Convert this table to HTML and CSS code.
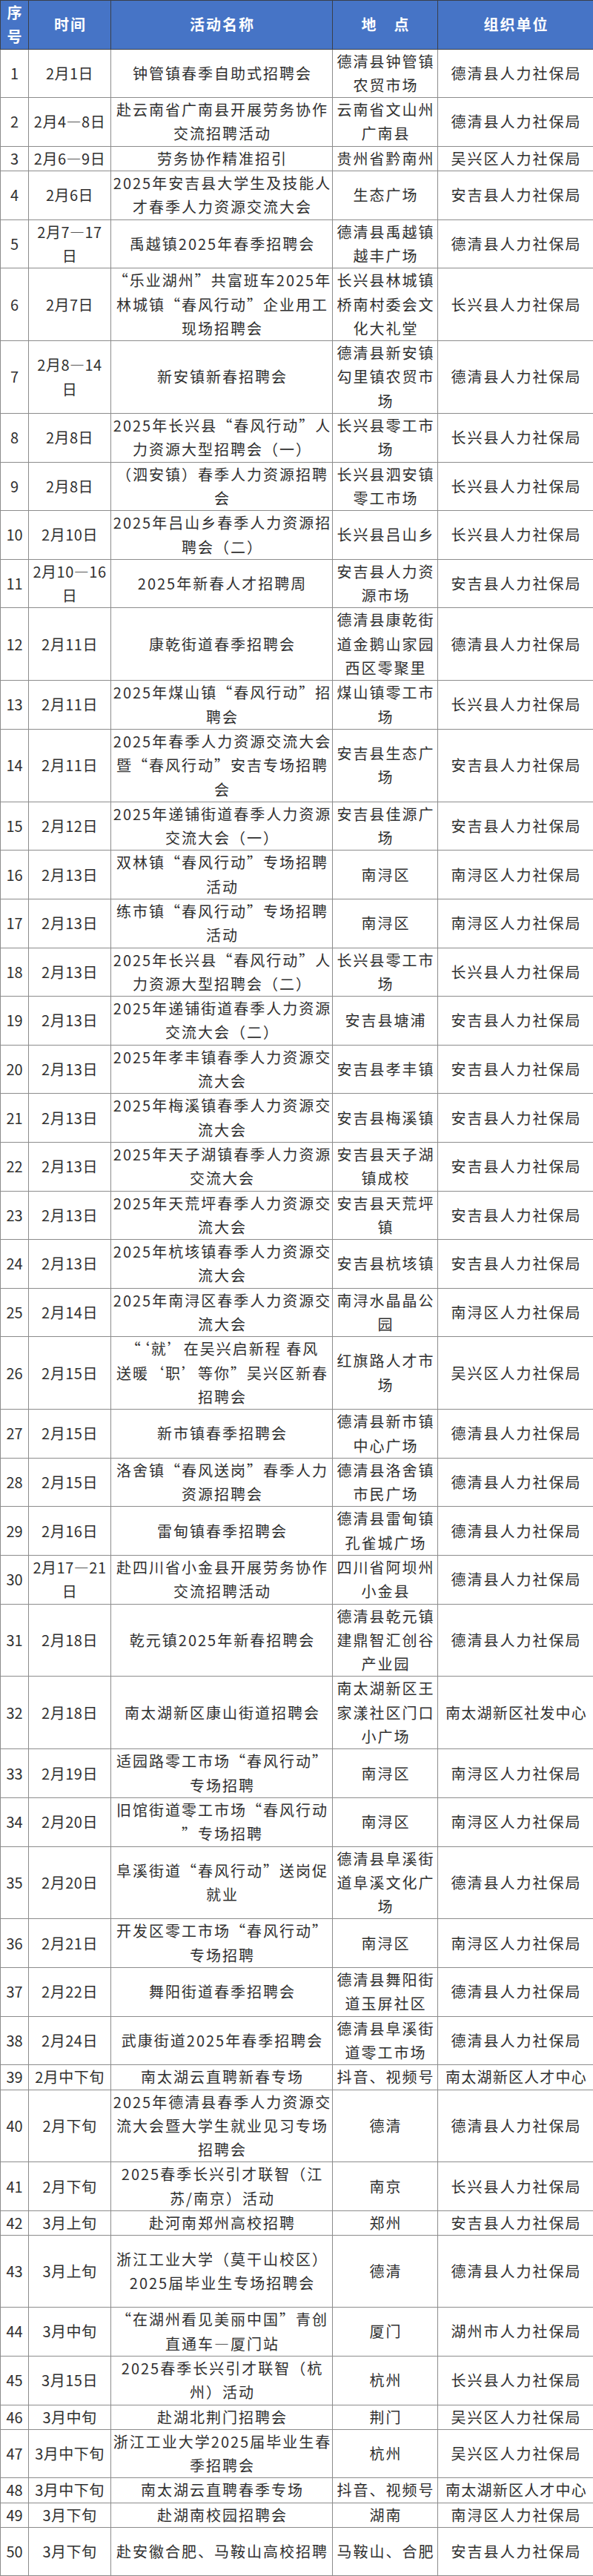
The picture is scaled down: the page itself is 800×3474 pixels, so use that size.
FILE: index.html
```html
<!DOCTYPE html>
<html lang="zh-CN">
<head>
<meta charset="utf-8">
<title>湖州市春季招聘活动安排</title>
<link rel="stylesheet" href="styles.css">
</head>
<body>
<table class="schedule">
<colgroup>
<col class="w-no"><col class="w-time"><col class="w-name"><col class="w-place"><col class="w-org">
</colgroup>
<thead>
<tr class="head">
<th class="c-no">序<br>号</th><th>时间</th><th>活动名称</th><th>地　点</th><th>组织单位</th>
</tr>
</thead>
<tbody>
<tr><td class="c-no">1</td><td class="c-time">2月1日</td><td>钟管镇春季自助式招聘会</td><td>德清县钟管镇<br>农贸市场</td><td>德清县人力社保局</td></tr>
<tr><td class="c-no">2</td><td class="c-time">2月4—8日</td><td>赴云南省广南县开展劳务协作<br>交流招聘活动</td><td>云南省文山州<br>广南县</td><td>德清县人力社保局</td></tr>
<tr><td class="c-no">3</td><td class="c-time">2月6—9日</td><td>劳务协作精准招引</td><td>贵州省黔南州</td><td>吴兴区人力社保局</td></tr>
<tr><td class="c-no">4</td><td class="c-time">2月6日</td><td>2025年安吉县大学生及技能人<br>才春季人力资源交流大会</td><td>生态广场</td><td>安吉县人力社保局</td></tr>
<tr><td class="c-no">5</td><td class="c-time">2月7—17<br>日</td><td>禹越镇2025年春季招聘会</td><td>德清县禹越镇<br>越丰广场</td><td>德清县人力社保局</td></tr>
<tr><td class="c-no">6</td><td class="c-time">2月7日</td><td>“乐业湖州”共富班车2025年<br>林城镇“春风行动”企业用工<br>现场招聘会</td><td>长兴县林城镇<br>桥南村委会文<br>化大礼堂</td><td>长兴县人力社保局</td></tr>
<tr><td class="c-no">7</td><td class="c-time">2月8—14<br>日</td><td>新安镇新春招聘会</td><td>德清县新安镇<br>勾里镇农贸市<br>场</td><td>德清县人力社保局</td></tr>
<tr><td class="c-no">8</td><td class="c-time">2月8日</td><td>2025年长兴县“春风行动”人<br>力资源大型招聘会（一）</td><td>长兴县零工市<br>场</td><td>长兴县人力社保局</td></tr>
<tr><td class="c-no">9</td><td class="c-time">2月8日</td><td>（泗安镇）春季人力资源招聘<br>会</td><td>长兴县泗安镇<br>零工市场</td><td>长兴县人力社保局</td></tr>
<tr><td class="c-no">10</td><td class="c-time">2月10日</td><td>2025年吕山乡春季人力资源招<br>聘会（二）</td><td>长兴县吕山乡</td><td>长兴县人力社保局</td></tr>
<tr><td class="c-no">11</td><td class="c-time">2月10—16<br>日</td><td>2025年新春人才招聘周</td><td>安吉县人力资<br>源市场</td><td>安吉县人力社保局</td></tr>
<tr><td class="c-no">12</td><td class="c-time">2月11日</td><td>康乾街道春季招聘会</td><td>德清县康乾街<br>道金鹅山家园<br>西区零聚里</td><td>德清县人力社保局</td></tr>
<tr><td class="c-no">13</td><td class="c-time">2月11日</td><td>2025年煤山镇“春风行动”招<br>聘会</td><td>煤山镇零工市<br>场</td><td>长兴县人力社保局</td></tr>
<tr><td class="c-no">14</td><td class="c-time">2月11日</td><td>2025年春季人力资源交流大会<br>暨“春风行动”安吉专场招聘<br>会</td><td>安吉县生态广<br>场</td><td>安吉县人力社保局</td></tr>
<tr><td class="c-no">15</td><td class="c-time">2月12日</td><td>2025年递铺街道春季人力资源<br>交流大会（一）</td><td>安吉县佳源广<br>场</td><td>安吉县人力社保局</td></tr>
<tr><td class="c-no">16</td><td class="c-time">2月13日</td><td>双林镇“春风行动”专场招聘<br>活动</td><td>南浔区</td><td>南浔区人力社保局</td></tr>
<tr><td class="c-no">17</td><td class="c-time">2月13日</td><td>练市镇“春风行动”专场招聘<br>活动</td><td>南浔区</td><td>南浔区人力社保局</td></tr>
<tr><td class="c-no">18</td><td class="c-time">2月13日</td><td>2025年长兴县“春风行动”人<br>力资源大型招聘会（二）</td><td>长兴县零工市<br>场</td><td>长兴县人力社保局</td></tr>
<tr><td class="c-no">19</td><td class="c-time">2月13日</td><td>2025年递铺街道春季人力资源<br>交流大会（二）</td><td>安吉县塘浦</td><td>安吉县人力社保局</td></tr>
<tr><td class="c-no">20</td><td class="c-time">2月13日</td><td>2025年孝丰镇春季人力资源交<br>流大会</td><td>安吉县孝丰镇</td><td>安吉县人力社保局</td></tr>
<tr><td class="c-no">21</td><td class="c-time">2月13日</td><td>2025年梅溪镇春季人力资源交<br>流大会</td><td>安吉县梅溪镇</td><td>安吉县人力社保局</td></tr>
<tr><td class="c-no">22</td><td class="c-time">2月13日</td><td>2025年天子湖镇春季人力资源<br>交流大会</td><td>安吉县天子湖<br>镇成校</td><td>安吉县人力社保局</td></tr>
<tr><td class="c-no">23</td><td class="c-time">2月13日</td><td>2025年天荒坪春季人力资源交<br>流大会</td><td>安吉县天荒坪<br>镇</td><td>安吉县人力社保局</td></tr>
<tr><td class="c-no">24</td><td class="c-time">2月13日</td><td>2025年杭垓镇春季人力资源交<br>流大会</td><td>安吉县杭垓镇</td><td>安吉县人力社保局</td></tr>
<tr><td class="c-no">25</td><td class="c-time">2月14日</td><td>2025年南浔区春季人力资源交<br>流大会</td><td>南浔水晶晶公<br>园</td><td>南浔区人力社保局</td></tr>
<tr><td class="c-no">26</td><td class="c-time">2月15日</td><td>“‘就’在吴兴启新程 春风<br>送暖‘职’等你”吴兴区新春<br>招聘会</td><td>红旗路人才市<br>场</td><td>吴兴区人力社保局</td></tr>
<tr><td class="c-no">27</td><td class="c-time">2月15日</td><td>新市镇春季招聘会</td><td>德清县新市镇<br>中心广场</td><td>德清县人力社保局</td></tr>
<tr><td class="c-no">28</td><td class="c-time">2月15日</td><td>洛舍镇“春风送岗”春季人力<br>资源招聘会</td><td>德清县洛舍镇<br>市民广场</td><td>德清县人力社保局</td></tr>
<tr><td class="c-no">29</td><td class="c-time">2月16日</td><td>雷甸镇春季招聘会</td><td>德清县雷甸镇<br>孔雀城广场</td><td>德清县人力社保局</td></tr>
<tr><td class="c-no">30</td><td class="c-time">2月17—21<br>日</td><td>赴四川省小金县开展劳务协作<br>交流招聘活动</td><td>四川省阿坝州<br>小金县</td><td>德清县人力社保局</td></tr>
<tr><td class="c-no">31</td><td class="c-time">2月18日</td><td>乾元镇2025年新春招聘会</td><td>德清县乾元镇<br>建鼎智汇创谷<br>产业园</td><td>德清县人力社保局</td></tr>
<tr><td class="c-no">32</td><td class="c-time">2月18日</td><td>南太湖新区康山街道招聘会</td><td>南太湖新区王<br>家漾社区门口<br>小广场</td><td class="tight">南太湖新区社发中心</td></tr>
<tr><td class="c-no">33</td><td class="c-time">2月19日</td><td>适园路零工市场“春风行动”<br>专场招聘</td><td>南浔区</td><td>南浔区人力社保局</td></tr>
<tr><td class="c-no">34</td><td class="c-time">2月20日</td><td>旧馆街道零工市场“春风行动<br>”专场招聘</td><td>南浔区</td><td>南浔区人力社保局</td></tr>
<tr><td class="c-no">35</td><td class="c-time">2月20日</td><td>阜溪街道“春风行动”送岗促<br>就业</td><td>德清县阜溪街<br>道阜溪文化广<br>场</td><td>德清县人力社保局</td></tr>
<tr><td class="c-no">36</td><td class="c-time">2月21日</td><td>开发区零工市场“春风行动”<br>专场招聘</td><td>南浔区</td><td>南浔区人力社保局</td></tr>
<tr><td class="c-no">37</td><td class="c-time">2月22日</td><td>舞阳街道春季招聘会</td><td>德清县舞阳街<br>道玉屏社区</td><td>德清县人力社保局</td></tr>
<tr><td class="c-no">38</td><td class="c-time">2月24日</td><td>武康街道2025年春季招聘会</td><td>德清县阜溪街<br>道零工市场</td><td>德清县人力社保局</td></tr>
<tr><td class="c-no">39</td><td class="c-time">2月中下旬</td><td>南太湖云直聘新春专场</td><td>抖音、视频号</td><td class="tight">南太湖新区人才中心</td></tr>
<tr><td class="c-no">40</td><td class="c-time">2月下旬</td><td>2025年德清县春季人力资源交<br>流大会暨大学生就业见习专场<br>招聘会</td><td>德清</td><td>德清县人力社保局</td></tr>
<tr><td class="c-no">41</td><td class="c-time">2月下旬</td><td>2025春季长兴引才联智（江<br>苏/南京）活动</td><td>南京</td><td>长兴县人力社保局</td></tr>
<tr><td class="c-no">42</td><td class="c-time">3月上旬</td><td>赴河南郑州高校招聘</td><td>郑州</td><td>安吉县人力社保局</td></tr>
<tr class="row-3"><td class="c-no">43</td><td class="c-time">3月上旬</td><td>浙江工业大学（莫干山校区）<br>2025届毕业生专场招聘会</td><td>德清</td><td>德清县人力社保局</td></tr>
<tr><td class="c-no">44</td><td class="c-time">3月中旬</td><td>“在湖州看见美丽中国”青创<br>直通车—厦门站</td><td>厦门</td><td>湖州市人力社保局</td></tr>
<tr><td class="c-no">45</td><td class="c-time">3月15日</td><td>2025春季长兴引才联智（杭<br>州）活动</td><td>杭州</td><td>长兴县人力社保局</td></tr>
<tr><td class="c-no">46</td><td class="c-time">3月中旬</td><td>赴湖北荆门招聘会</td><td>荆门</td><td>吴兴区人力社保局</td></tr>
<tr><td class="c-no">47</td><td class="c-time">3月中下旬</td><td>浙江工业大学2025届毕业生春<br>季招聘会</td><td>杭州</td><td>吴兴区人力社保局</td></tr>
<tr><td class="c-no">48</td><td class="c-time">3月中下旬</td><td>南太湖云直聘春季专场</td><td>抖音、视频号</td><td class="tight">南太湖新区人才中心</td></tr>
<tr><td class="c-no">49</td><td class="c-time">3月下旬</td><td>赴湖南校园招聘会</td><td>湖南</td><td>南浔区人力社保局</td></tr>
<tr class="row-2"><td class="c-no">50</td><td class="c-time">3月下旬</td><td>赴安徽合肥、马鞍山高校招聘</td><td>马鞍山、合肥</td><td>安吉县人力社保局</td></tr>
</tbody>
</table>
</body>
</html>
```

FILE: styles.css
```css
html, body {
  margin: 0;
  padding: 0;
  background: #ffffff;
}

body {
  font-family: "Noto Sans CJK SC", "Noto Sans", sans-serif;
  color: #303030;
}

.schedule {
  width: 800px;
  border-collapse: collapse;
  table-layout: fixed;
}

.w-no { width: 38px; }
.w-time { width: 111px; }
.w-name { width: 299px; }
.w-place { width: 142px; }
.w-org { width: 210px; }

.schedule th,
.schedule td {
  border: 1px solid #8c8c8c;
  padding: 0 0 0 2px;
  text-align: center;
  vertical-align: middle;
  font-size: 20px;
  line-height: 32.3px;
  letter-spacing: 2px;
  white-space: nowrap;
  overflow: hidden;
}

.schedule .head th {
  background: #4674c6;
  color: #ffffff;
  font-weight: 700;
  border-color: #3a3f4a;
}

.schedule .c-no {
  letter-spacing: 0;
  padding: 0;
}

.schedule .c-time {
  letter-spacing: 0.5px;
  padding: 0;
}

.schedule .tight {
  letter-spacing: 1.2px;
}

.row-3 td {
  height: 96px;
}

.row-2 td {
  height: 64px;
}
```
